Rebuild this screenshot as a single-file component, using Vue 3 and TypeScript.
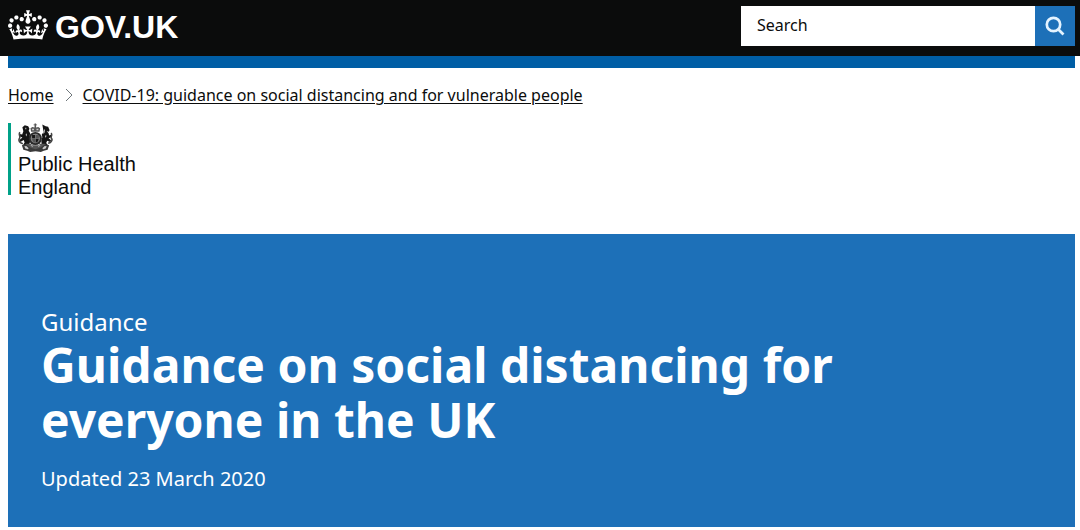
<script setup lang="ts">
import { ref } from 'vue'

interface Crumb {
  label: string
  href: string
}

const query = ref('')

const crumbs: Crumb[] = [
  { label: 'Home', href: '#home' },
  { label: 'COVID-19: guidance on social distancing and for vulnerable people', href: '#covid-19' },
]
</script>

<template>
  <div class="page">
    <header class="header">
      <a class="logo" href="#home">
        <svg class="crown" viewBox="0 0 132 97" aria-hidden="true">
          <path
            fill="currentColor"
            d="M25 30.2c3.5 1.5 7.7-.2 9.1-3.7 1.5-3.6-.2-7.8-3.9-9.2-3.6-1.4-7.6.3-9.1 3.9-1.4 3.5.3 7.5 3.9 9zM9 39.5c3.6 1.5 7.8-.2 9.2-3.7 1.5-3.6-.2-7.8-3.9-9.1-3.6-1.5-7.6.2-9.1 3.8-1.4 3.5.3 7.5 3.8 9zM4.4 57.2c3.5 1.5 7.7-.2 9.1-3.8 1.5-3.6-.2-7.7-3.9-9.1-3.5-1.5-7.6.3-9.1 3.8-1.4 3.5.3 7.6 3.9 9.1zm38.3-21.4c3.5 1.5 7.7-.2 9.1-3.8 1.5-3.6-.2-7.7-3.9-9.1-3.6-1.5-7.6.3-9.1 3.8-1.3 3.6.4 7.7 3.9 9.1zm64.4-5.6c-3.6 1.5-7.8-.2-9.1-3.7-1.5-3.6.2-7.8 3.8-9.2 3.6-1.4 7.7.3 9.2 3.9 1.3 3.5-.4 7.5-3.9 9zm15.9 9.3c-3.6 1.5-7.7-.2-9.1-3.7-1.5-3.6.2-7.8 3.7-9.1 3.6-1.5 7.7.2 9.2 3.8 1.5 3.5-.3 7.5-3.8 9zm4.7 17.7c-3.6 1.5-7.8-.2-9.2-3.8-1.5-3.6.2-7.7 3.9-9.1 3.6-1.5 7.7.3 9.2 3.8 1.3 3.5-.4 7.6-3.9 9.1zM89.3 35.8c-3.6 1.5-7.8-.2-9.2-3.8-1.4-3.6.2-7.7 3.9-9.1 3.6-1.5 7.7.3 9.2 3.8 1.4 3.6-.3 7.7-3.9 9.1zM69.7 17.7l8.9 4.7V9.3l-8.9 2.8c-.2-.3-.5-.6-.9-.9L72.4 0H59.6l3.5 11.2c-.3.3-.6.5-.9.9l-8.8-2.8v13.1l8.8-4.7c.3.3.6.7.9.9l-5 15.4v.1c-.2.8-.4 1.6-.4 2.4 0 4.1 3.1 7.5 7 8.1h.2c.3 0 .7.1 1 .1.4 0 .7 0 1-.1h.2c4-.6 7.1-4.1 7.1-8.1 0-.8-.1-1.7-.4-2.4V34l-5.1-15.4c.4-.2.7-.6 1-.9zM66 92.8c16.9 0 32.8 1.1 47.1 3.2 4-16.9 8.9-26.7 14-33.5l-9.6-3.4c1 4.9 1.1 7.2 0 10.2-1.5-1.4-3-4.3-4.2-8.7L108.6 76c2.8-2 5-3.2 7.5-3.3-4.4 9.4-10 11.9-13.6 11.2-4.3-.8-6.3-4.6-5.6-7.9 1-4.7 5.7-5.9 8-.5 4.3-8.7-3-11.4-7.6-8.8 7.1-7.2 7.9-13.5 2.1-21.1-8 6.1-8.1 12.3-4.5 20.8-4.7-5.4-12.1-2.5-9.5 6.2 3.4-5.2 7.9-2 7.2 3.1-.6 4.3-6.4 7.8-13.5 7.2-10.3-.9-10.9-8-11.2-13.8 2.5-.5 7.1 1.8 11 7.3L80.2 60c-4.1 4.4-8 5.3-12.3 5.4 1.4-4.4 8-11.6 8-11.6H55.5s6.4 7.2 7.9 11.6c-4.2-.1-8-1-12.3-5.4l1.4 16.4c3.9-5.5 8.5-7.7 10.9-7.3-.3 5.8-.9 12.8-11.1 13.8-7.2.6-12.9-2.9-13.5-7.2-.7-5 3.8-8.3 7.1-3.1 2.7-8.7-4.6-11.6-9.4-6.2 3.7-8.5 3.6-14.7-4.6-20.8-5.8 7.6-5 13.9 2.2 21.1-4.7-2.6-11.9.1-7.7 8.8 2.3-5.5 7.1-4.2 8.1.5.7 3.3-1.3 7.1-5.7 7.9-3.5.7-9-1.8-13.5-11.2 2.5.1 4.7 1.3 7.5 3.3l-4.7-15.4c-1.2 4.4-2.7 7.2-4.3 8.7-1.1-3-.9-5.3 0-10.2l-9.5 3.4c5 6.9 9.9 16.7 14 33.5 14.8-2.1 30.8-3.2 47.7-3.2z"
          />
        </svg>
        <span>GOV.UK</span>
      </a>
      <form class="search" role="search" @submit.prevent>
        <input v-model="query" class="search-input" type="search" placeholder="Search" aria-label="Search" />
        <button class="search-button" type="submit" aria-label="Search GOV.UK">
          <svg class="search-icon" viewBox="0 0 20 20" aria-hidden="true">
            <circle cx="8.5" cy="8.5" r="6.7" />
            <path d="M13.2 13.2 18.5 18.5" />
          </svg>
        </button>
      </form>
    </header>

    <main class="content">
      <div class="phase-bar"></div>

      <nav class="breadcrumbs" aria-label="Breadcrumb">
        <template v-for="(crumb, index) in crumbs" :key="crumb.href">
          <svg v-if="index > 0" class="chevron" viewBox="0 0 8 14" aria-hidden="true">
            <path d="M1 1l6 6-6 6" />
          </svg>
          <a :href="crumb.href">{{ crumb.label }}</a>
        </template>
      </nav>

      <a class="organisation" href="#public-health-england">
        <svg class="crest" viewBox="0 0 36 30" aria-hidden="true">
          <!-- crown -->
          <path class="mid" d="M13.5 8.5 12.8 5l2-1.2 2.2.4V2h-1V1h1V0h1.600v1h1v1h-1v2.200l2.200-.4 2 1.200-.7 3.500z" />
          <path class="light" d="M14.500 5.500h2v1.500h-2zM19 5.500h2v1.500h-2z" />
          <!-- lion -->
          <path class="dark" d="M4.500 4 7 2l3.500 1 1.300 2.500-.8 2 1.500 2.500-.5 3 .8 5-1.500 4-3 2.500-3.500-1.500 2-3.500-1-2.500-3.300 2-1-2 3-2.500-2.500-1-.2-2.500 2.500.5L5.500 8z" />
          <path class="tail" d="M2 9C0 11.500 3 13 1.500 15.500S2 20 5 21" />
          <path class="light" d="M7.500 4.500h1V6h-1zM8.300 10l.9 1.500-.5 2-.8-1.500z" />
          <!-- unicorn -->
          <path class="dark" d="M25 1l3.500 2 2.500.5 1.500 3.500-1 1.500-2-.8 2 2.500.5 2.300 2-.8v2.500l-2.500 1 2.500 2-1 2-3-1.500-1 2.500 2.500 3-3 1.500-4-2-.5-4.500 1-4-.5-3 2-2-.5-2.500z" />
          <path class="tail" d="M34 10c2 2-1 3.500.5 5.500s-1 4.500-3.500 5" />
          <path class="light" d="M27 6l.8.5-.5 3-1.300 1.500zM28.500 12l.8.8-.7 2-.8-1z" />
          <!-- garter and shield -->
          <circle cx="17.800" cy="15.500" r="6.800" fill="#2b2b2b" />
          <circle cx="17.800" cy="15.500" r="4.800" fill="#808080" />
          <path class="dark" d="M14.500 12h3v3.200h-3zM18.200 15.700h3.200l-1 2.800-2.200 1.500z" />
          <path class="mid" d="M18.200 12h3.200v3h-3.200zM14.300 15.800h3.200V20l-2.200-1.500z" />
          <!-- compartment and motto scroll -->
          <path class="mid" d="M8 21h5l2 1.500h6l2-1.500h5l1 4-5 3h-12l-5-3z" />
          <path d="M4 22.500l4-1 5 3.500 5 1.500 5-1.500 5-3.500 4 1-1.500 4.500-4 1-3 1.500-5.500-1-5.500 1-3-1.500-4-1z" fill="#3a3a3a" />
          <path class="light" d="M6.500 23.500l2-.3 2.500 2.300-1 1-2.500-.7zM29.500 23.500l-2-.3-2.500 2.300 1 1 2.500-.7zM12.500 22l2.500 1v1.500zM23.500 22 21 23v1.500z" />
        </svg>
        <span class="organisation-name">Public Health<br />England</span>
      </a>

      <section class="hero">
        <p class="context">Guidance</p>
        <h1>Guidance on social distancing for everyone in the UK</h1>
        <p class="updated">Updated 23 March 2020</p>
      </section>
    </main>
  </div>
</template>

<style>
body {
  background: #fff;
}
</style>

<style scoped>
.page {
  color: #0b0c0c;
  font-family: "Noto Sans", "Open Sans", sans-serif;
  font-size: 16px;
  line-height: 24px;
}

.header {
  display: flex;
  align-items: flex-start;
  justify-content: space-between;
  box-sizing: border-box;
  height: 56px;
  padding: 6px 5px 0 8px;
  background: #0b0c0c;
}

.logo {
  display: flex;
  align-items: center;
  gap: 7px;
  height: 42px;
  color: #fff;
  font-family: "Liberation Sans", Arial, sans-serif;
  font-size: 32px;
  font-weight: 700;
  text-decoration: none;
}

.crown {
  width: 40px;
  height: 30px;
  margin-bottom: 4px;
}

.search {
  display: flex;
  width: 334px;
  max-width: 50%;
  height: 40px;
}

.search-input {
  flex: 1;
  min-width: 0;
  box-sizing: border-box;
  margin: 0;
  padding: 0 16px 2px;
  border: 0;
  border-radius: 0;
  background: #fff;
  color: #0b0c0c;
  font: inherit;
  appearance: none;
}

.search-input::placeholder {
  color: #0b0c0c;
  opacity: 1;
}

.search-button {
  display: flex;
  align-items: center;
  justify-content: center;
  width: 40px;
  padding: 0;
  border: 0;
  background: #1d70b8;
}

.search-icon {
  width: 20px;
  height: 20px;
  fill: none;
  stroke: #e4f3ff;
  stroke-width: 2.7;
}

.content {
  padding: 0 5px 0 8px;
}

.phase-bar {
  height: 12px;
  background: #005ea5;
}

.breadcrumbs {
  display: flex;
  align-items: center;
  padding: 15px 0 16px;
}

.breadcrumbs a {
  color: #0b0c0c;
  text-decoration: underline;
  text-underline-offset: 2px;
}

.chevron {
  width: 8px;
  height: 14px;
  margin: 0 10px 0 11px;
  fill: none;
  stroke: #6f777b;
  stroke-width: 1;
}

.organisation {
  display: flex;
  flex-direction: column;
  width: fit-content;
  height: 72px;
  padding-left: 7px;
  border-left: 3px solid #00a188;
  color: #0b0c0c;
  font-family: "Liberation Sans", Arial, sans-serif;
  font-size: 20px;
  line-height: 23px;
  text-decoration: none;
}

.crest {
  flex: none;
  width: 35px;
  height: 30px;
}

.crest .dark {
  fill: #151515;
}

.crest .mid {
  fill: #555;
}

.crest .light {
  fill: #ccc;
}

.crest .tail {
  fill: none;
  stroke: #444;
  stroke-width: 1.6;
}

.hero {
  margin-top: 39px;
  padding: 73px 33px 36px;
  background: #1d70b8;
  color: #fff;
}

.hero p,
.hero h1 {
  margin: 0;
}

.context {
  font-size: 24px;
  line-height: 30px;
}

.hero h1 {
  max-width: 860px;
  font-size: 48px;
  line-height: 55px;
}

.hero .updated {
  margin-top: 20px;
  font-size: 20px;
  line-height: 24px;
}
</style>
